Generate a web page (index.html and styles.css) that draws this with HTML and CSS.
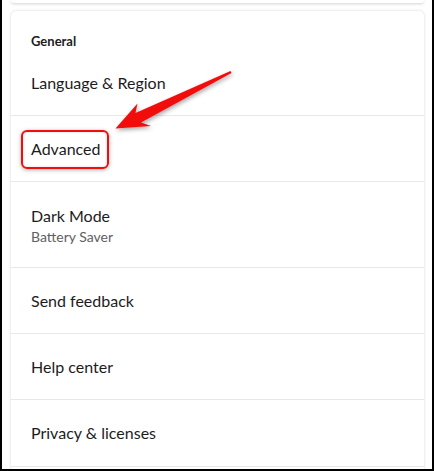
FILE: index.html
```html
<!DOCTYPE html>
<html>
<head>
<meta charset="utf-8">
<link rel="stylesheet" href="styles.css">
</head>
<body>
<div class="frame">
  <div class="prev-card"></div>
  <div class="card">
    <div class="section-title">General</div>
    <div class="row row-first"><span class="label">Language &amp; Region</span></div>
    <div class="row"><span class="label highlight">Advanced</span></div>
    <div class="row row-tall">
      <span class="label">Dark Mode</span>
      <span class="sub">Battery Saver</span>
    </div>
    <div class="row"><span class="label">Send feedback</span></div>
    <div class="row"><span class="label">Help center</span></div>
    <div class="row row-last"><span class="label">Privacy &amp; licenses</span></div>
    <div class="row row-stub"></div>
  </div>
  <svg class="arrow" width="434" height="471" viewBox="0 0 434 471">
    <defs>
      <filter id="sh" x="-20%" y="-20%" width="140%" height="140%">
        <feDropShadow dx="1" dy="2" stdDeviation="2" flood-color="#000" flood-opacity="0.35"/>
      </filter>
    </defs>
    <polygon filter="url(#sh)" fill="#f20c0c"
      points="229.5,73 139,122.5 149,126 113.5,128.5 135.5,103.5 133.5,113 228.5,71"/>
  </svg>
</div>
</body>
</html>
```

FILE: styles.css
```css
html, body {
  margin: 0;
  padding: 0;
  background: #fff;
}
body {
  font-family: Lato, "Noto Sans", sans-serif;
  color: #1d1c1d;
}
.frame {
  position: relative;
  box-sizing: border-box;
  width: 434px;
  height: 471px;
  border: 2px solid #000;
  border-top: none;
  padding: 0 8px 0 9px;
  overflow: hidden;
  background: #fff;
}
.prev-card {
  height: 3px;
  margin-bottom: 8px;
  background: #fff;
  border-radius: 0 0 4px 4px;
  box-shadow: 0 1px 3px rgba(0, 0, 0, 0.18);
}
.card {
  background: #fff;
  border-radius: 5px;
  box-shadow: 0 0 3px rgba(0, 0, 0, 0.16);
  display: flex;
  flex-direction: column;
}
.section-title {
  padding: 20px 20px 0;
  height: 20px;
  line-height: 20px;
  font-size: 13px;
  font-weight: 700;
}
.row {
  position: relative;
  height: 65px;
  border-top: 1px solid #e8e8e8;
  padding: 0 20px;
  display: flex;
  flex-direction: column;
  justify-content: center;
}
.row-first {
  height: 64px;
  border-top: none;
}
.row-tall {
  height: 85px;
  justify-content: flex-start;
  padding-top: 0;
}
.row-tall .label {
  margin-top: 24px;
}
.row-last {
  height: 66px;
}
.row-stub {
  height: 20px;
}
.label {
  font-size: 16px;
  line-height: 20px;
  align-self: flex-start;
  position: relative;
}
.sub {
  font-size: 14px;
  line-height: 20px;
  color: #616061;
  margin-top: 1px;
}
.highlight::after {
  content: "";
  position: absolute;
  left: -10px;
  right: -9px;
  top: -9px;
  bottom: -10px;
  border: 2px solid #f20c0c;
  border-radius: 6px;
  box-shadow: 0 1px 4px rgba(0, 0, 0, 0.3), inset 0 0 3px rgba(0, 0, 0, 0.15);
}
.arrow {
  position: absolute;
  left: 0;
  top: 0;
  pointer-events: none;
}
```
